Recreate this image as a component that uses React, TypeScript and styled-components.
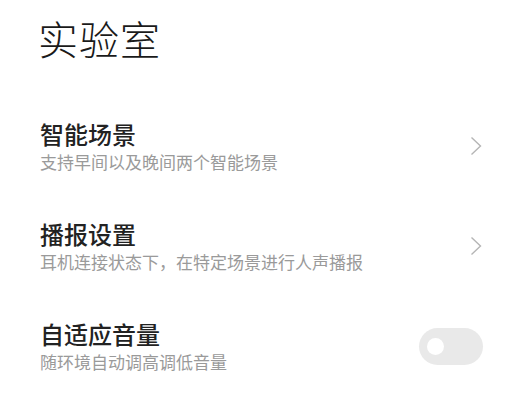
import { createGlobalStyle, styled } from 'styled-components';

const GlobalStyle = createGlobalStyle`
  html, body {
    margin: 0;
    padding: 0;
    background: #fff;
  }
  body {
    font-family: 'Noto Sans CJK SC', 'Noto Sans', sans-serif;
  }
`;

const Page = styled.div`
  width: 521px;
  height: 400px;
  overflow: hidden;
  background: #fff;
`;

const Header = styled.h1`
  margin: 0;
  height: 96px;
  box-sizing: border-box;
  padding: 14px 0 0 38px;
  font-size: 40px;
  line-height: 48px;
  font-weight: 300;
  color: #1a1a1a;
  letter-spacing: 1px;
`;

const Row = styled.div`
  height: 100px;
  display: flex;
  align-items: center;
  padding: 0 38px 0 40px;
`;

const Texts = styled.div`
  flex: 1;
  display: flex;
  flex-direction: column;
`;

const Title = styled.div`
  font-size: 24px;
  line-height: 32px;
  font-weight: 500;
  color: #222;
`;

const Sub = styled.div`
  font-size: 17px;
  line-height: 24px;
  color: #9a9a9a;
`;

const Chevron = styled.svg`
  width: 12px;
  height: 20px;
  margin-right: 1px;
`;

const Toggle = styled.div<{ $on?: boolean }>`
  width: 64px;
  height: 37px;
  border-radius: 19px;
  background: ${(p) => (p.$on ? '#0d84ff' : '#e9e9e9')};
  display: flex;
  align-items: center;
  padding: 0 8px;
  box-sizing: border-box;
  justify-content: ${(p) => (p.$on ? 'flex-end' : 'flex-start')};
`;

const Knob = styled.div`
  width: 17px;
  height: 17px;
  border-radius: 50%;
  background: #fff;
`;

const Arrow = () => (
  <Chevron viewBox="0 0 12 20">
    <polyline points="1.5,1.5 10.5,10 1.5,18.5" fill="none" stroke="#b5b5b5" strokeWidth="1.4" />
  </Chevron>
);

type Item = { title: string; sub: string; kind: 'link' | 'switch' };

const items: Item[] = [
  { title: '智能场景', sub: '支持早间以及晚间两个智能场景', kind: 'link' },
  { title: '播报设置', sub: '耳机连接状态下，在特定场景进行人声播报', kind: 'link' },
  { title: '自适应音量', sub: '随环境自动调高调低音量', kind: 'switch' },
];

export default function App() {
  return (
    <Page>
      <GlobalStyle />
      <Header>实验室</Header>
      {items.map((it) => (
        <Row key={it.title}>
          <Texts>
            <Title>{it.title}</Title>
            <Sub>{it.sub}</Sub>
          </Texts>
          {it.kind === 'link' ? (
            <Arrow />
          ) : (
            <Toggle>
              <Knob />
            </Toggle>
          )}
        </Row>
      ))}
    </Page>
  );
}
